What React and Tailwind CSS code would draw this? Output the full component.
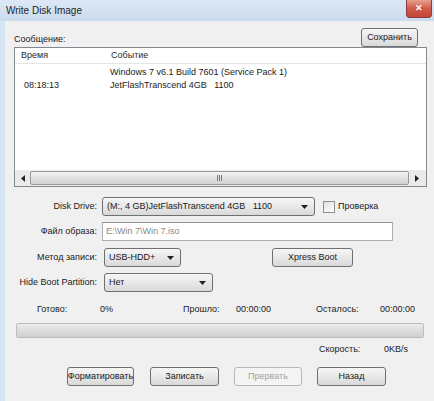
import React from "react";

const FONT = { fontFamily: '"Liberation Sans", Arial, sans-serif' };

const btn =
  "h-[19px] rounded-[3px] border border-[#707070] bg-gradient-to-b from-[#f6f6f6] via-[#e8e8e8] to-[#d9d9d9] text-[9px] text-[#1a1a1a] flex items-center";

const Arrow = ({ dir = "down" }) => {
  const d =
    dir === "down"
      ? "M0 0 L7 0 L3.5 4 Z"
      : dir === "left"
        ? "M4 0 L4 7 L0 3.5 Z"
        : "M0 0 L4 3.5 L0 7 Z";
  return (
    <svg width={dir === "down" ? 7 : 4} height={dir === "down" ? 4 : 7}>
      <path d={d} fill="#222" />
    </svg>
  );
};

const Combo = ({ width, children }) => (
  <div className={`${btn} ${width} shrink-0 justify-between pl-[4px] pr-[6px]`}>
    <span className="truncate whitespace-pre">{children}</span>
    <Arrow />
  </div>
);

const Label = ({ children }) => (
  <div className="w-[97px] shrink-0 whitespace-nowrap pr-[5px] text-right text-[9px] text-[#1a1a1a]">
    {children}
  </div>
);

const Button = ({ width, disabled, children }) => (
  <div
    className={
      disabled
        ? `h-[19px] ${width} rounded-[3px] border border-[#b5b9bc] bg-[#f4f4f4] text-[9px] text-[#a3a3a3] flex items-center justify-center`
        : `${btn} ${width} justify-center`
    }
  >
    {children}
  </div>
);

export default function App() {
  return (
    <div
      className="flex h-[401px] w-[434px] flex-col overflow-hidden bg-[#d5e3f2]"
      style={FONT}
    >
      {/* Title bar */}
      <div className="flex h-[21px] shrink-0 items-start justify-between bg-gradient-to-b from-[#dce8f5] to-[#cbdbee]">
        <span className="pl-[6px] pt-[5px] text-[10px] leading-[12px] text-[#1e1e1e]">
          Write Disk Image
        </span>
        <div className="mr-[2px] flex h-[18px] w-[26px] items-center justify-center rounded-b-[4px] border border-t-0 border-[#8c3a3a] bg-gradient-to-b from-[#e4a090] via-[#d0594a] to-[#c44636]">
          <span className="text-[9px] font-bold leading-none text-white">✕</span>
        </div>
      </div>

      {/* Body */}
      <div className="ml-[5px] flex flex-1 flex-col bg-[#f0f0f0]">
        <div className="flex h-[26px] items-end justify-between pl-[9px] pr-[16px] pt-[7px]">
          <span className="pb-[1px] text-[9px] text-[#1a1a1a]">Сообщение:</span>
          <Button width="w-[57px]">Сохранить</Button>
        </div>

        {/* List view */}
        <div className="ml-[9px] flex h-[140px] w-[413px] flex-col border border-[#828790] bg-white">
          <div className="flex h-[16px] shrink-0 items-center border-b border-[#e5e5e5] text-[9px] text-[#2a2a2a]">
            <span className="w-[96px] pl-[6px]">Время</span>
            <span>Событие</span>
          </div>
          <div className="flex flex-1 flex-col pt-[2px] text-[9px] text-[#1a1a1a]">
            <div className="flex h-[13px] items-center">
              <span className="w-[95px]" />
              <span>Windows 7 v6.1 Build 7601 (Service Pack 1)</span>
            </div>
            <div className="flex h-[13px] items-center">
              <span className="w-[95px] pl-[9px]">08:18:13</span>
              <span className="whitespace-pre">JetFlashTranscend 4GB   1100</span>
            </div>
          </div>
          {/* Horizontal scrollbar */}
          <div className="flex h-[16px] shrink-0 items-center bg-[#eaeaea] px-[1px]">
            <div className="flex w-[14px] items-center justify-center">
              <Arrow dir="left" />
            </div>
            <div className="flex h-[14px] flex-1 items-center justify-center rounded-[2px] border border-[#9a9a9a] bg-gradient-to-b from-[#f2f2f2] to-[#d2d2d2]">
              <div className="flex gap-[1px]">
                <div className="h-[6px] w-[1px] bg-[#777]" />
                <div className="h-[6px] w-[1px] bg-[#777]" />
                <div className="h-[6px] w-[1px] bg-[#777]" />
              </div>
            </div>
            <div className="flex w-[16px] items-center justify-center">
              <Arrow dir="right" />
            </div>
          </div>
        </div>

        {/* Form rows */}
        <div className="mt-[10px] flex h-[19px] items-center">
          <Label>Disk Drive:</Label>
          <Combo width="w-[213px]">(M:, 4 GB)JetFlashTranscend 4GB   1100</Combo>
          <div className="ml-[8px] h-[12px] w-[12px] border border-[#8e8f8f] bg-gradient-to-br from-[#e2e2e2] to-white" />
          <span className="ml-[3px] text-[9px] text-[#1a1a1a]">Проверка</span>
        </div>

        <div className="mt-[6px] flex h-[19px] items-center">
          <Label>Файл образа:</Label>
          <div className="flex h-[19px] w-[291px] items-center border border-[#abadb3] border-t-[#8e9196] bg-white pl-[3px] text-[9px] text-[#8a8a8a]">
            E:\Win 7\Win 7.iso
          </div>
        </div>

        <div className="mt-[7px] flex h-[19px] items-center">
          <Label>Метод записи:</Label>
          <div className="ml-[2px]">
            <Combo width="w-[77px]">USB-HDD+</Combo>
          </div>
          <div className="ml-[91px]">
            <Button width="w-[81px]">Xpress Boot</Button>
          </div>
        </div>

        <div className="mt-[6px] flex h-[19px] items-center">
          <Label>Hide Boot Partition:</Label>
          <div className="ml-[2px]">
            <Combo width="w-[109px]">Нет</Combo>
          </div>
        </div>

        {/* Stats */}
        <div className="mt-[12px] flex h-[12px] items-center pl-[32px] text-[9px] text-[#1a1a1a]">
          <span className="w-[63px]">Готово:</span>
          <span className="w-[83px]">0%</span>
          <span className="w-[53px]">Прошло:</span>
          <span className="w-[80px]">00:00:00</span>
          <span className="w-[64px]">Осталось:</span>
          <span>00:00:00</span>
        </div>

        <div className="ml-[11px] mt-[7px] h-[15px] w-[408px] rounded-[2px] border border-[#bcbcbc] bg-gradient-to-b from-[#ededed] via-[#dcdcdc] to-[#d0d0d0]" />

        <div className="mt-[6px] flex h-[12px] items-center pl-[314px] text-[9px] text-[#1a1a1a]">
          <span className="w-[65px]">Скорость:</span>
          <span>0KB/s</span>
        </div>

        <div className="mt-[11px] flex items-center pl-[62px]">
          <Button width="w-[67px]">Форматировать</Button>
          <div className="ml-[16px]">
            <Button width="w-[69px]">Записать</Button>
          </div>
          <div className="ml-[15px]">
            <Button width="w-[68px]" disabled>
              Прервать
            </Button>
          </div>
          <div className="ml-[15px]">
            <Button width="w-[69px]">Назад</Button>
          </div>
        </div>
      </div>
    </div>
  );
}
